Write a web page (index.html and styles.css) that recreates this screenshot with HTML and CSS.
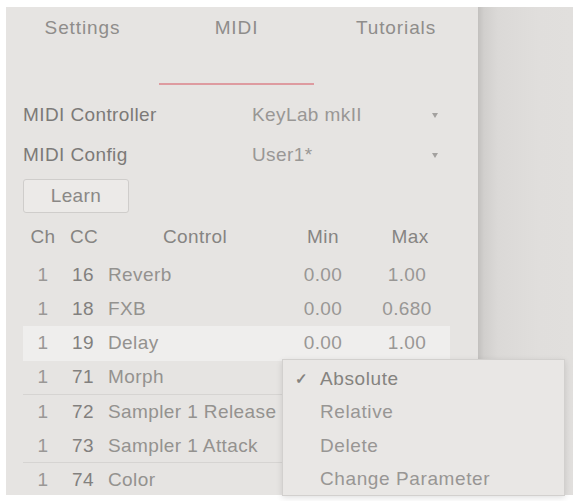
FILE: index.html
```html
<!DOCTYPE html>
<html>
<head>
<meta charset="utf-8">
<link rel="stylesheet" href="styles.css">
</head>
<body>
<div class="screen">
  <div class="panel">
    <div class="tabs">
      <div class="tab">Settings</div>
      <div class="tab active">MIDI</div>
      <div class="tab">Tutorials</div>
    </div>
    <div class="fields">
      <div class="field"><span class="label">MIDI Controller</span><span class="value">KeyLab mkII</span><span class="arrow"></span></div>
      <div class="field"><span class="label">MIDI Config</span><span class="value">User1*</span><span class="arrow"></span></div>
    </div>
    <button class="learn">Learn</button>
    <div class="table">
      <div class="row head"><span class="ch">Ch</span><span class="cc">CC</span><span class="ctl">Control</span><span class="num">Min</span><span class="num max">Max</span></div>
      <div class="row"><span class="ch">1</span><span class="cc">16</span><span class="ctl">Reverb</span><span class="num">0.00</span><span class="num">1.00</span></div>
      <div class="row"><span class="ch">1</span><span class="cc">18</span><span class="ctl">FXB</span><span class="num">0.00</span><span class="num">0.680</span></div>
      <div class="row selected"><span class="ch">1</span><span class="cc">19</span><span class="ctl">Delay</span><span class="num">0.00</span><span class="num">1.00</span></div>
      <div class="row sep"><span class="ch">1</span><span class="cc">71</span><span class="ctl">Morph</span><span class="num"></span><span class="num"></span></div>
      <div class="row"><span class="ch">1</span><span class="cc">72</span><span class="ctl">Sampler 1 Release</span><span class="num"></span><span class="num"></span></div>
      <div class="row sep"><span class="ch">1</span><span class="cc">73</span><span class="ctl">Sampler 1 Attack</span><span class="num"></span><span class="num"></span></div>
      <div class="row"><span class="ch">1</span><span class="cc">74</span><span class="ctl">Color</span><span class="num"></span><span class="num"></span></div>
    </div>
  </div>
  <div class="side"></div>
  <div class="menu">
    <div class="item checked"><span class="check">✓</span>Absolute</div>
    <div class="item">Relative</div>
    <div class="item">Delete</div>
    <div class="item">Change Parameter</div>
  </div>
</div>
</body>
</html>
```

FILE: styles.css
```css
html, body {
  margin: 0;
  padding: 0;
  background: #ffffff;
}
body {
  font-family: "Liberation Sans", Arial, sans-serif;
  font-size: 19px;
  letter-spacing: 0.4px;
  color: #8a8886;
}
.screen {
  position: relative;
  width: 573px;
  height: 501px;
  padding: 7px 0 6px 6px;
  box-sizing: border-box;
  display: flex;
}
.panel {
  width: 472px;
  background: #e6e4e2;
  padding-left: 17px;
  box-sizing: border-box;
}
.side {
  flex: 1;
  background: linear-gradient(90deg, #c2c0be 0, #d1cfcd 6px, #dbd9d7 20px, #e0dedc 60px, #e1dfdd 100%);
}
.tabs {
  display: grid;
  grid-template-columns: 153px 155px 164px;
  margin-left: -17px;
}
.tab {
  height: 78px;
  padding-top: 10px;
  box-sizing: border-box;
  line-height: 22px;
  text-align: center;
  color: #8f8d8b;
  border-bottom: 2px solid transparent;
  letter-spacing: 0.9px;
}
.tab.active {
  border-bottom-color: #de9ba0;
}
.fields {
  margin-top: 10px;
  width: 422px;
}
.field {
  display: grid;
  grid-template-columns: 229px 1fr 20px;
  align-items: center;
  height: 40px;
}
.label {
  color: #7c7a78;
}
.value {
  color: #999795;
}
.arrow {
  justify-self: center;
  width: 0;
  height: 0;
  border-left: 3.5px solid transparent;
  border-right: 3.5px solid transparent;
  border-top: 5px solid #a3a19f;
}
.learn {
  display: block;
  margin-top: 4px;
  width: 106px;
  height: 34px;
  background: #eceae8;
  border: 1px solid #cfcdcb;
  border-radius: 3px;
  font-family: inherit;
  font-size: 19px;
  letter-spacing: 0.4px;
  color: #8a8886;
  padding: 0;
}
.table {
  margin-top: 6px;
  width: 427px;
}
.row {
  display: grid;
  grid-template-columns: 40px 45px 174px 82px 86px;
  align-items: center;
  height: 34.2px;
  box-sizing: border-box;
}
.row.head {
  height: 36px;
  margin-bottom: 3px;
}
.row.head span {
  color: #868482;
}
.row.head .cc {
  padding-left: 7px;
}
.row.head .ctl {
  text-align: center;
}
.row.head .max {
  padding-left: 6px;
}
.ch {
  text-align: center;
  color: #9a9896;
}
.cc {
  padding-left: 9px;
  color: #82807e;
}
.ctl {
  color: #94928f;
}
.num {
  text-align: center;
  color: #999795;
}
.row.selected {
  background: #efeeed;
}
.row.sep {
  border-bottom: 1px solid #d6d4d2;
}
.menu {
  position: absolute;
  left: 282px;
  top: 359px;
  width: 283px;
  height: 137px;
  box-sizing: border-box;
  padding-top: 2px;
  background: #e9e7e5;
  border: 1px solid #d2d0ce;
  box-shadow: 0 2px 6px rgba(0, 0, 0, 0.12);
}
.item {
  position: relative;
  height: 33.3px;
  line-height: 33.3px;
  padding-left: 37px;
  color: #989694;
  letter-spacing: 0.6px;
}
.item.checked {
  color: #85837f;
}
.check {
  position: absolute;
  left: 12px;
  top: 0;
  font-size: 15px;
  font-weight: bold;
  color: #85837f;
}
```
